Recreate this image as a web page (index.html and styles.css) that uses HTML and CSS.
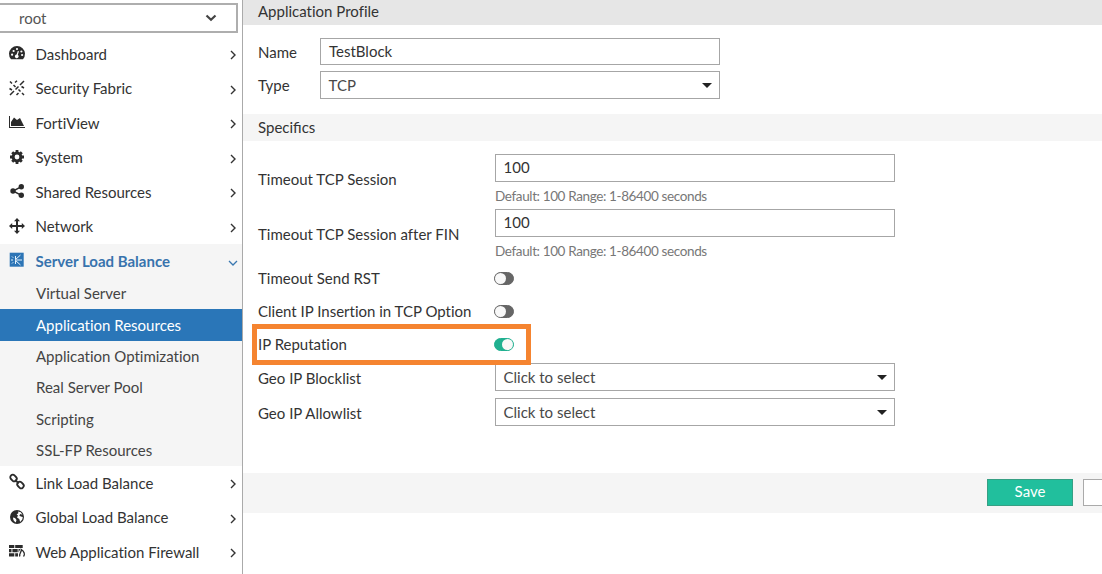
FILE: index.html
```html
<!DOCTYPE html>
<html lang="en">
<head>
<meta charset="utf-8">
<title>Application Profile</title>
<link rel="stylesheet" href="styles.css">
</head>
<body>
<div class="app">
  <aside class="sidebar">
    <div class="vdom"><span>root</span><svg class="vdom-arrow" width="12" height="8" viewBox="0 0 12 8"><path d="M1.500 1.500 6 5.800l4.500-4.300"/></svg></div>
    <nav class="nav">
      <a class="item"><svg class="icon" viewBox="0 0 16 16"><path fill-rule="evenodd" d="M2 14.200A8 8 0 1 1 14 14.200ZM2 9.700a1.100 1.100 0 1 0 2.200 0 1.100 1.100 0 1 0-2.200 0M3.500 6a1.100 1.100 0 1 0 2.200 0 1.100 1.100 0 1 0-2.200 0M6.900 4a1.100 1.100 0 1 0 2.200 0 1.100 1.100 0 1 0-2.200 0M11.300 6.500a1.100 1.100 0 1 0 2.200 0 1.100 1.100 0 1 0-2.200 0M12 10a1.100 1.100 0 1 0 2.200 0 1.100 1.100 0 1 0-2.200 0M8.800 5.900 7.600 9.500a1.900 1.900 0 1 0 1.200.300L10 6.300Z"/></svg><span class="label">Dashboard</span><svg class="chev" viewBox="0 0 8 10"><path d="m2 1 4 4-4 4"/></svg></a>
      <a class="item"><svg class="icon" viewBox="0 0 16 16"><path class="stroke" d="M1 1.500 3 3.500M4.500 5l2 2M.5 8.500l2.500 1.500M1 15l4-4M6.500 9.500l3-3M11 5l4-4M6 2.500 8 .8M9.500 9.500l2 2M13 13l2 2M12.500 6.500 15 8M7.500 15l2-2"/></svg><span class="label">Security Fabric</span><svg class="chev" viewBox="0 0 8 10"><path d="m2 1 4 4-4 4"/></svg></a>
      <a class="item"><svg class="icon" viewBox="0 0 16 16"><path d="M0 2h1v11h15v1H0ZM2 12V8l3-4.500 3 2.500 3-2 2 4 2 4Z"/></svg><span class="label">FortiView</span><svg class="chev" viewBox="0 0 8 10"><path d="m2 1 4 4-4 4"/></svg></a>
      <a class="item"><svg class="icon" viewBox="0 0 16 16"><g fill="none" stroke="currentColor"><circle cx="8" cy="8" r="3.900" stroke-width="3"/><path stroke-width="2.800" d="M8 1v2.500M8 12.500V15M1 8h2.500M12.500 8H15M3.200 3.200l1.500 1.500M11.300 11.300l1.500 1.500M3.200 12.800l1.500-1.500M11.300 4.700l1.500-1.500"/></g></svg><span class="label">System</span><svg class="chev" viewBox="0 0 8 10"><path d="m2 1 4 4-4 4"/></svg></a>
      <a class="item"><svg class="icon" viewBox="0 0 16 16"><circle cx="4" cy="8" r="2.700"/><circle cx="12.300" cy="3.700" r="2.700"/><circle cx="12.300" cy="12.300" r="2.700"/><path class="stroke" d="M12 3.800 4 8l8 4.200"/></svg><span class="label">Shared Resources</span><svg class="chev" viewBox="0 0 8 10"><path d="m2 1 4 4-4 4"/></svg></a>
      <a class="item"><svg class="icon" viewBox="0 0 16 16"><path d="m8 0 3 3.200H9V7h3.800V5L16 8l-3.200 3V9H9v3.800h2L8 16l-3-3.200h2V9H3.200v2L0 8l3.200-3v2H7V3.200H5Z"/></svg><span class="label">Network</span><svg class="chev" viewBox="0 0 8 10"><path d="m2 1 4 4-4 4"/></svg></a>
      <div class="group">
        <a class="item open"><svg class="icon" viewBox="0 0 16 16"><path d="M.7.700h14v14H.7Z"/><path class="lines" d="M2 8h2M3 4.500l1.200 1.200M3 11.500l1.200-1.200M6 8h7M6.500 7.500 11.500 3M6.500 8.500l5 4.500M6.500 4v3.500M6.500 8.500V12"/></svg><span class="label">Server Load Balance</span><svg class="chev-down" viewBox="0 0 10 8"><path d="m1 2 4 4 4-4"/></svg></a>
        <a class="sub">Virtual Server</a>
        <a class="sub selected">Application Resources</a>
        <a class="sub">Application Optimization</a>
        <a class="sub">Real Server Pool</a>
        <a class="sub">Scripting</a>
        <a class="sub">SSL-FP Resources</a>
      </div>
      <a class="item"><svg class="icon" viewBox="0 0 16 16"><g class="ring"><rect x="1" y="1.500" width="7" height="5" rx="2.400" transform="rotate(45 4.500 4)"/><rect x="8" y="8.500" width="7" height="5" rx="2.400" transform="rotate(45 11.500 11)"/><path d="m6 6 3.800 3.300"/></g></svg><span class="label">Link Load Balance</span><svg class="chev" viewBox="0 0 8 10"><path d="m2 1 4 4-4 4"/></svg></a>
      <a class="item"><svg class="icon" viewBox="0 0 16 16"><path fill-rule="evenodd" d="M8 1a7 7 0 1 0 0 14A7 7 0 0 0 8 1M8.800 2.400l3 .8 1.700 2.600-2.200-.8-1 1.500 1.500 1 2 .5-.5 2.500-2.200 2.400-.8-3-2.300-1.300L9 6.500 7.600 5.500 9.500 4ZM4 8.500l2 .500 1.500 2-.7 2.500C5 12.500 4 10.500 4 8.500Z"/></svg><span class="label">Global Load Balance</span><svg class="chev" viewBox="0 0 8 10"><path d="m2 1 4 4-4 4"/></svg></a>
      <a class="item"><svg class="icon" viewBox="0 0 16 16"><path d="M0 2h5.300v3H0ZM6.200 2h7.500v3H6.200ZM0 6h2.500v3.200H0ZM3.400 6h5.300v3.200H3.400ZM9.500 6h1.800L9.800 9.200h-.3ZM0 10.200h5.300v3.300H0ZM6.200 10.200H9v3.300H6.200Z"/><path class="flame" d="M11 13.500C9.200 11 12.800 9.500 12.300 6.500c3 2 4 5 2.200 7"/></svg><span class="label">Web Application Firewall</span><svg class="chev" viewBox="0 0 8 10"><path d="m2 1 4 4-4 4"/></svg></a>
    </nav>
  </aside>
  <main class="main">
    <h1 class="title">Application Profile</h1>
    <section class="basic">
      <label class="lab">Name</label><div class="field name">TestBlock</div>
      <label class="lab">Type</label><div class="field select">TCP<i class="caret"></i></div>
    </section>
    <h2 class="subtitle">Specifics</h2>
    <section class="specifics">
      <div class="row timeout"><label class="lab">Timeout TCP Session</label><div class="control"><div class="field">100</div><p class="hint">Default: 100 Range: 1-86400 seconds</p></div></div>
      <div class="row timeout"><label class="lab">Timeout TCP Session after FIN</label><div class="control"><div class="field">100</div><p class="hint">Default: 100 Range: 1-86400 seconds</p></div></div>
      <div class="row switch-row"><label class="lab">Timeout Send RST</label><span class="toggle"></span></div>
      <div class="row switch-row"><label class="lab">Client IP Insertion in TCP Option</label><span class="toggle"></span></div>
      <div class="row switch-row marked"><label class="lab">IP Reputation</label><span class="toggle on"></span></div>
      <div class="row geo"><label class="lab">Geo IP Blocklist</label><div class="field select">Click to select<i class="caret"></i></div></div>
      <div class="row geo"><label class="lab">Geo IP Allowlist</label><div class="field select">Click to select<i class="caret"></i></div></div>
    </section>
    <footer class="actions"><button class="btn save">Save</button><button class="btn" aria-label="Cancel"></button></footer>
  </main>
</div>
</body>
</html>
```

FILE: styles.css
```css
*, *::before, *::after { box-sizing: border-box; }
body { margin: 0; background: #fff; color: #333; font: 15px/20px Lato, sans-serif; font-variant-ligatures: none; }
.app { display: flex; width: 1102px; height: 574px; overflow: hidden; }
.sidebar { flex: none; width: 243px; border-right: 1px solid #aaa; }
.vdom { display: flex; align-items: center; justify-content: space-between; width: 238px; height: 30px; margin: 3px 0 4px; padding: 0 19px 0 19px; border: 2px solid #aeaeae; border-left: 0; color: #555; }
.vdom-arrow { fill: none; stroke: #444; stroke-width: 2.2; }
.item { display: flex; align-items: center; height: 34.5px; padding-left: 9px; padding-right: 5px; }
.icon { flex: none; width: 16px; height: 16px; margin: -2px 10.5px 0 0; fill: currentColor; color: #2b2b2b; overflow: visible; }
.stroke { fill: none; stroke: currentColor; stroke-width: 1.5; }
.ring { fill: none; stroke: currentColor; stroke-width: 1.8; }
.flame { fill: none; stroke: currentColor; stroke-width: 1.3; }
.lines { fill: none; stroke: #e4f2fc; stroke-width: 1; }
.label { flex: 1; padding-bottom: 1px; }
.chev { width: 8px; height: 10px; margin-top: 2px; fill: none; stroke: #333; stroke-width: 1.4; }
.chev-down { width: 10px; height: 8px; margin: 3px -1px 0 0; fill: none; stroke: #3a78b0; stroke-width: 1.3; }
.group { height: 222px; background: #f5f5f5; }
.open { height: 34px; color: #3873ad; font-weight: 700; }
.open .icon { color: #2d75b6; }
.sub { display: flex; align-items: center; height: 31.4px; padding: 0 0 1px 36px; color: #444; }
.selected { background: #2a76b8; color: #fff; }
.main { flex: 1; min-width: 0; }
.title, .subtitle { margin: 0; padding-left: 15px; font-size: 15px; font-weight: 400; }
.title { height: 25px; line-height: 22px; background: #e6e6e6; }
.subtitle { height: 27px; line-height: 26px; background: #f5f5f5; font-variant-ligatures: normal; }
.basic { display: grid; grid-template-columns: 62px 400px; grid-template-rows: 27px 28px; row-gap: 6px; height: 89px; padding: 13px 0 0 15px; }
.basic .lab { padding-top: 4px; }
.field { width: 400px; height: 28px; padding-left: 7.5px; border: 1px solid #a6a6a6; background: #fff; line-height: 25px; }
.name { height: 27px; padding-left: 8px; line-height: 24px; }
.select { display: flex; justify-content: space-between; padding-right: 7px; color: #484848; line-height: 27px; }
.caret { width: 0; height: 0; margin-top: 11px; border: 5px solid transparent; border-top-color: #222; border-bottom: 0; }
.specifics { height: 332px; padding: 13px 0 0 15px; }
.row { display: grid; grid-template-columns: 237px 400px; }
.timeout { height: 55px; }
.timeout .lab { padding-top: 15px; }
.hint { margin: 4px 0 0; color: #777; font-size: 13.5px; letter-spacing: -0.37px; }
.switch-row { height: 33px; align-items: center; }
.switch-row .lab { padding-bottom: 1px; }
.timeout + .switch-row { height: 31px; padding-bottom: 2px; }
.toggle { display: flex; width: 20px; height: 13px; margin-left: -1px; border: 1px solid #666; border-radius: 7px; background: #666; }
.toggle::before { width: 11px; height: 11px; border-radius: 50%; background: #f8f8f8; content: ""; }
.on { justify-content: flex-end; border-color: #20b090; background: #20b090; }
.marked { position: relative; }
.marked::after { position: absolute; top: -4px; left: -6px; width: 279px; height: 41px; border: 5px solid #f58430; content: ""; }
.geo { height: 35px; }
.geo .field { margin-top: 2px; }
.geo .lab { padding-top: 7px; }
.actions { display: flex; gap: 10px; height: 40px; padding: 6px 0 0 744px; background: #f5f5f5; overflow: hidden; }
.btn { flex: none; width: 86px; height: 27px; padding: 0 0 2px; border: 1px solid #aaa; background: #fff; font: 15px/23px Lato, sans-serif; }
.save { border-color: #36a084; background: #21bf9d; color: #fff; }
```
